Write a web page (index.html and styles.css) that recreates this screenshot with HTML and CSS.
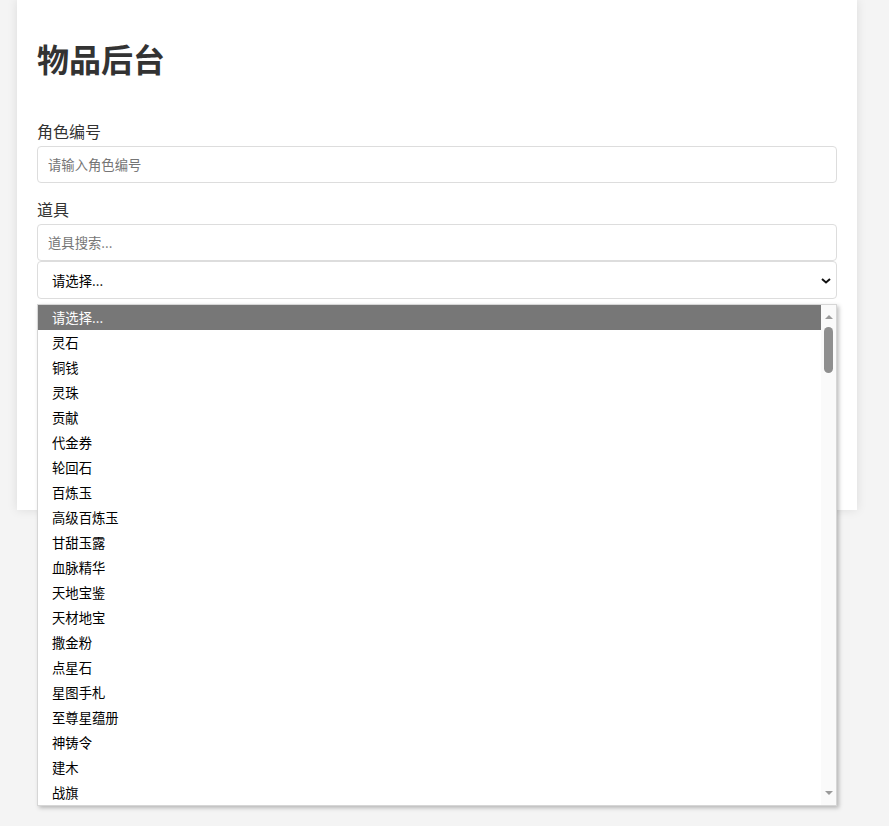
FILE: index.html
```html
<!DOCTYPE html>
<html lang="zh-CN">
<head>
    <meta charset="UTF-8">
    <meta name="viewport" content="width=device-width, initial-scale=1.0">
    <title>物品后台</title>
    <link rel="stylesheet" href="styles.css">
</head>
<body>

    <div class="container">
        <h1>物品后台</h1>

        <div class="form-group">
            <label for="roleId">角色编号</label>
            <input type="text" id="roleId" placeholder="请输入角色编号">
        </div>

        <div class="form-group">
            <label for="itemSearch">道具</label>
            <input type="text" id="itemSearch" placeholder="道具搜索...">
            <div class="select-wrap">
                <select id="itemSelect">
                    <option>请选择...</option>
                </select>
                <svg class="select-arrow" width="10" height="6" viewBox="0 0 10 6">
                    <path d="M1 1 L5 4.5 L9 1" fill="none" stroke="#111" stroke-width="2"/>
                </svg>

                <!-- Liste déroulante ouverte -->
                <div class="dropdown">
                    <ul class="options">
                        <li class="selected">请选择...</li>
                        <li>灵石</li>
                        <li>铜钱</li>
                        <li>灵珠</li>
                        <li>贡献</li>
                        <li>代金券</li>
                        <li>轮回石</li>
                        <li>百炼玉</li>
                        <li>高级百炼玉</li>
                        <li>甘甜玉露</li>
                        <li>血脉精华</li>
                        <li>天地宝鉴</li>
                        <li>天材地宝</li>
                        <li>撒金粉</li>
                        <li>点星石</li>
                        <li>星图手札</li>
                        <li>至尊星蕴册</li>
                        <li>神铸令</li>
                        <li>建木</li>
                        <li>战旗</li>
                    </ul>
                    <div class="scrollbar">
                        <span class="arrow up"></span>
                        <span class="thumb"></span>
                        <span class="track"></span>
                        <span class="arrow down"></span>
                    </div>
                </div>
            </div>
        </div>
    </div>

</body>
</html>
```

FILE: styles.css
```css
html {
    height: 100%;
}
body {
    font-family: "Noto Sans CJK SC", "Noto Sans", sans-serif;
    background-color: #f4f4f4;
    color: #333;
    margin: 0;
    padding: 0;
    min-height: 100%;
}
.container {
    width: 800px;
    margin: 0 0 0 17px;
    padding: 38px 20px 196px;
    background-color: #fff;
    box-shadow: 0 0 10px rgba(0, 0, 0, 0.1);
}
h1 {
    font-size: 32px;
    line-height: 40px;
    font-weight: bold;
    margin: 0 0 42px;
    color: #333;
}
.form-group {
    margin-bottom: 15px;
}
.form-group label {
    display: block;
    font-size: 16px;
    line-height: 22px;
    margin-bottom: 4px;
}
.form-group input,
.form-group select {
    display: block;
    width: 100%;
    height: 37px;
    padding: 0 10px;
    margin: 0;
    border: 1px solid #ddd;
    border-radius: 4px;
    box-sizing: border-box;
    font-family: "Noto Sans CJK SC", "Noto Sans", sans-serif;
    font-size: 13.33px;
    color: #000;
    background-color: #fff;
    outline: none;
}
.form-group input::placeholder {
    color: #757575;
}
.select-wrap {
    position: relative;
}
.form-group select {
    height: 38px;
    padding-left: 14px;
    appearance: none;
    -webkit-appearance: none;
}
.select-arrow {
    position: absolute;
    right: 6px;
    top: 17px;
    pointer-events: none;
}
.dropdown {
    position: absolute;
    top: 43px;
    left: 0;
    width: 100%;
    height: 502px;
    box-sizing: border-box;
    display: flex;
    background-color: #fff;
    border: 1px solid #d6d6d6;
    box-shadow: 2px 2px 4px rgba(0, 0, 0, 0.25);
    z-index: 10;
}
.options {
    flex: 1;
    list-style: none;
    margin: 0;
    padding: 0;
}
.options li {
    height: 25px;
    line-height: 25px;
    padding-left: 14px;
    font-size: 13.33px;
    color: #000;
}
.options li.selected {
    background-color: #777;
    color: #fff;
}
.scrollbar {
    width: 15px;
    display: flex;
    flex-direction: column;
    align-items: center;
    background-color: #fafafa;
}
.arrow {
    width: 0;
    height: 0;
    border-left: 4.5px solid transparent;
    border-right: 4.5px solid transparent;
}
.arrow.up {
    margin-top: 10px;
    border-bottom: 4.5px solid #9a9a9a;
}
.arrow.down {
    margin-bottom: 10px;
    border-top: 4.5px solid #9a9a9a;
}
.thumb {
    margin-top: 8px;
    width: 9px;
    height: 46px;
    border-radius: 5px;
    background-color: #8f8f8f;
}
.track {
    flex: 1;
}
```
